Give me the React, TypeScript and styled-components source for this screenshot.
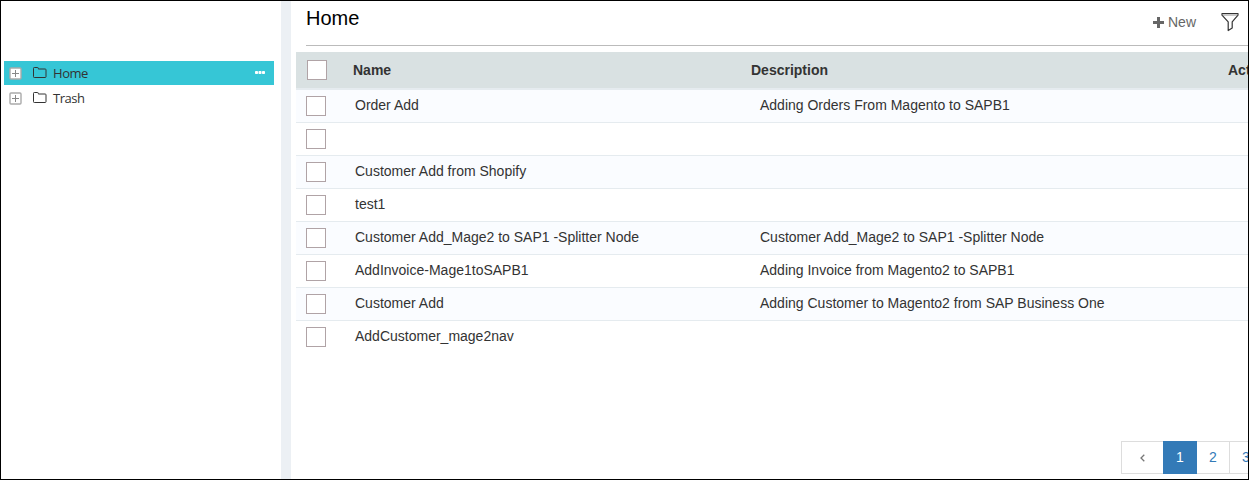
import React from 'react';
import styled, { createGlobalStyle } from 'styled-components';

const GlobalStyle = createGlobalStyle`
  *, *::before, *::after { box-sizing: border-box; }
  body { margin: 0; background: #fff; color: #333; font: 14px/20px "Liberation Sans", Arial, sans-serif; }
`;

const Frame = styled.div`
  display: flex;
  width: 1249px;
  height: 480px;
  border: 1px solid #000;
  overflow: hidden;
`;

const Sidebar = styled.nav`
  flex: 0 0 280px;
  padding: 60px 7px 0 3px;
`;

const TreeItem = styled.div<{ $active?: boolean }>`
  display: flex;
  align-items: center;
  height: 24px;
  margin-bottom: 1px;
  padding: 0 8px 0 5px;
  background: ${(p) => (p.$active ? '#36c6d6' : 'transparent')};
  svg { flex: none; }
`;

const TreeLabel = styled.span`
  flex: 1;
  margin-left: 6px;
  font: 13px/24px "Open Sans", "Noto Sans", sans-serif;
  letter-spacing: -0.45px;
`;

const Divider = styled.div`
  flex: 0 0 10px;
  background: #ecf0f4;
`;

const Main = styled.main`
  flex: 1;
  min-width: 0;
  display: flex;
  flex-direction: column;
  padding-left: 5px;
  overflow: hidden;
`;

const Toolbar = styled.header`
  display: flex;
  align-items: flex-start;
  height: 45px;
  margin-left: 10px;
  border-bottom: 1px solid #bbb;
`;

const Title = styled.h1`
  flex: 1;
  margin: 0;
  padding-top: 5px;
  font-size: 20px;
  line-height: 24px;
  font-weight: 400;
  color: #000;
`;

const NewButton = styled.button`
  display: flex;
  align-items: center;
  gap: 4px;
  margin: 11px 25px 0 0;
  padding: 0;
  border: 0;
  background: none;
  color: #666;
  font: inherit;
`;

const FilterButton = styled.button`
  display: flex;
  margin: 11px 9px 0 0;
  padding: 0;
  border: 0;
  background: none;
`;

const HeaderRow = styled.div`
  display: grid;
  grid-template-columns: 57px 398px 477px 60px;
  align-items: center;
  height: 38px;
  margin-top: 6px;
  background: #d9e1e2;
  border-bottom: 2px solid #e5ebef;
  font-weight: 700;
`;

const Row = styled.div`
  display: grid;
  grid-template-columns: 59px 405px 468px 60px;
  height: 33px;
  border-bottom: 1px solid #e5ebef;
  line-height: 30px;
  white-space: pre;
  &:nth-child(odd) { background: #fafcff; }
  &:last-child { border-bottom: 0; background: #fff; }
`;

const CheckBox = styled.span<{ $head?: boolean }>`
  width: 20px;
  height: 20px;
  margin: ${(p) => (p.$head ? '0 0 0 11px' : '6px 0 0 10px')};
  border: 1px solid #b0a3a6;
  background: #fff;
`;

const Pager = styled.div`
  display: flex;
  margin: auto 0 5px 825px;
`;

const PageLink = styled.span<{ $current?: boolean; $width: number }>`
  flex: 0 0 ${(p) => p.$width}px;
  height: 33px;
  border: 1px solid ${(p) => (p.$current ? '#337ab7' : '#ddd')};
  border-left-width: ${(p) => (p.$current || p.$width === 42 ? 1 : 0)}px;
  border-right-width: ${(p) => (p.$width === 42 ? 0 : 1)}px;
  padding-bottom: 1px;
  background: ${(p) => (p.$current ? '#337ab7' : '#fff')};
  color: ${(p) => (p.$current ? '#fff' : '#337ab7')};
  line-height: 30px;
  text-align: center;
`;

const ExpandIcon = () => (
  <svg width="13" height="13" viewBox="0 0 13 13">
    <rect x="1" y="1" width="11" height="11" rx="1" fill="#fff" stroke="#aaa" strokeWidth="1.4" />
    <path d="M3 6.5h7M6.5 3v7" stroke="#888" />
  </svg>
);

const FolderGlyph = styled.svg`
  margin: 0 0 1px 11px;
`;

const FolderIcon = () => (
  <FolderGlyph width="14" height="11" viewBox="0 0 14 11">
    <path d="M.5 1.3q0-.8.8-.8h3.2q.8 0 .8.8v.7h6.9q.8 0 .8.8v6.9q0 .8-.8.8H1.3q-.8 0-.8-.8z" fill="none" stroke="#333" />
  </FolderGlyph>
);

const MoreGlyph = styled.svg`
  margin: 0 1px 1px 0;
`;

const MoreIcon = () => (
  <MoreGlyph width="10" height="3" viewBox="0 0 10 3" fill="#fff">
    <rect width="3" height="3" rx=".8" />
    <rect x="3.5" width="3" height="3" rx=".8" />
    <rect x="7" width="3" height="3" rx=".8" />
  </MoreGlyph>
);

const PlusIcon = () => (
  <svg width="11" height="11" viewBox="0 0 11 11">
    <path d="M5.5 0v11M0 5.5h11" stroke="#666" strokeWidth="3" />
  </svg>
);

const FilterIcon = () => (
  <svg width="18" height="20" viewBox="0 0 18 20">
    <path d="M1 1.5h16v1.7L11.2 9.8v6.3L7.2 18.5V9.8L1 3.2z" fill="none" stroke="#333" strokeWidth="1.2" strokeLinejoin="round" />
    <path d="M1.5 3h15" stroke="#777" strokeWidth=".8" />
  </svg>
);

const ChevronIcon = () => (
  <svg width="5" height="8" viewBox="0 0 5 8">
    <path d="M4.3.8L1 4l3.3 3.2" fill="none" stroke="#777" strokeWidth="1.3" />
  </svg>
);

const flows = [
  ['Order Add', 'Adding Orders From Magento to SAPB1'],
  ['', ''],
  ['Customer Add from Shopify', ''],
  ['test1', ''],
  ['Customer Add_Mage2 to SAP1 -Splitter Node', 'Customer Add_Mage2 to SAP1 -Splitter Node'],
  ['AddInvoice-Mage1toSAPB1', 'Adding Invoice from Magento2 to SAPB1'],
  ['Customer Add', 'Adding Customer to Magento2 from SAP Business One'],
  ['AddCustomer_mage2nav', ''],
];

export default function App() {
  return (
    <>
      <GlobalStyle />
      <Frame>
        <Sidebar>
          <TreeItem $active>
            <ExpandIcon />
            <FolderIcon />
            <TreeLabel>Home</TreeLabel>
            <MoreIcon />
          </TreeItem>
          <TreeItem>
            <ExpandIcon />
            <FolderIcon />
            <TreeLabel>Trash</TreeLabel>
          </TreeItem>
        </Sidebar>
        <Divider />
        <Main>
          <Toolbar>
            <Title>Home</Title>
            <NewButton><PlusIcon />New</NewButton>
            <FilterButton aria-label="Filter"><FilterIcon /></FilterButton>
          </Toolbar>
          <HeaderRow>
            <CheckBox $head />
            <span>Name</span>
            <span>Description</span>
            <span>Active</span>
          </HeaderRow>
          <div>
            {flows.map(([name, description], i) => (
              <Row key={i}>
                <CheckBox />
                <span>{name}</span>
                <span>{description}</span>
              </Row>
            ))}
          </div>
          <Pager>
            <PageLink $width={42}><ChevronIcon /></PageLink>
            <PageLink $width={34} $current>1</PageLink>
            <PageLink $width={33}>2</PageLink>
            <PageLink $width={33}>3</PageLink>
          </Pager>
        </Main>
      </Frame>
    </>
  );
}
